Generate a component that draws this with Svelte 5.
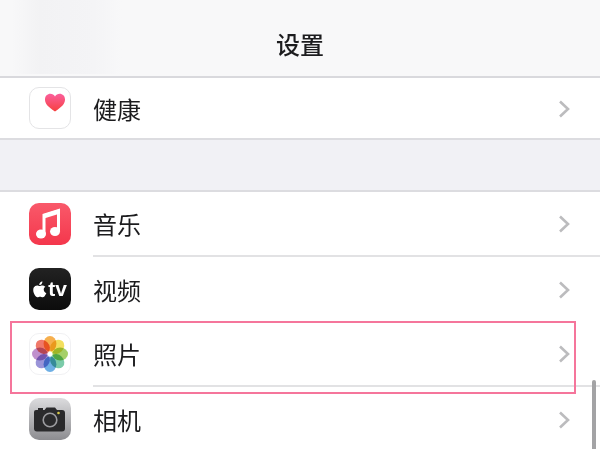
<script lang="ts">
	const petals = [
		{ angle: 0, color: "#f5a63a" },
		{ angle: 45, color: "#f2dc4c" },
		{ angle: 90, color: "#9ccb57" },
		{ angle: 135, color: "#6cc6a0" },
		{ angle: 180, color: "#5ea6e2" },
		{ angle: 225, color: "#8f88d4" },
		{ angle: 270, color: "#b984c8" },
		{ angle: 315, color: "#ef6a5a" },
	]
</script>

{#snippet chevron()}
	<svg class="chevron" width="12" height="18" viewBox="0 0 12 18">
		<path d="M2 1.5 L10 9 L2 16.5" fill="none" stroke="#bcbcbe" stroke-width="2.6" />
	</svg>
{/snippet}

<div class="page">
	<header class="nav">
		<div class="smear"></div>
		<h1>设置</h1>
	</header>

	<section class="group first">
		<div class="row health-row">
			<div class="icon health">
				<svg width="42" height="42" viewBox="0 0 42 42">
					<defs>
						<linearGradient id="heart" x1="0" y1="0" x2="0" y2="1">
							<stop offset="0" stop-color="#fb5f9c" />
							<stop offset="1" stop-color="#f6403f" />
						</linearGradient>
					</defs>
					<path d="M26 24.500 C18.500 19.500 16 16.500 16 12.500 C16 9 18.500 6.800 21.300 6.800 C23.300 6.800 25 7.800 26 9.600 C27 7.800 28.700 6.800 30.700 6.800 C33.500 6.800 36 9 36 12.500 C36 16.500 33.500 19.500 26 24.500 Z" fill="url(#heart)" />
				</svg>
			</div>
			<div class="label"><span>健康</span>{@render chevron()}</div>
		</div>
	</section>

	<div class="spacer"></div>

	<section class="group">
		<div class="row">
			<div class="icon music">
				<svg width="42" height="42" viewBox="0 0 42 42">
					<path d="M15 31 V12 L29.500 7.500 V28" fill="none" stroke="#fff" stroke-width="3" />
					<path d="M15 11 L29.500 6.500 V11 L15 15.500 Z" fill="#fff" />
					<ellipse cx="12" cy="31" rx="5" ry="4.500" fill="#fff" />
					<ellipse cx="26" cy="28.500" rx="5" ry="4.500" fill="#fff" />
				</svg>
			</div>
			<div class="label sep"><span>音乐</span>{@render chevron()}</div>
		</div>
		<div class="row">
			<div class="icon tv">
				<svg width="14" height="17" viewBox="1 1.500 18 22">
					<path d="M14.800 12.700 C14.800 10.300 16.800 9.200 16.900 9.100 C15.700 7.400 13.900 7.200 13.300 7.200 C11.800 7 10.300 8.100 9.500 8.100 C8.700 8.100 7.500 7.200 6.200 7.200 C4.500 7.300 3 8.200 2.100 9.700 C0.300 12.800 1.600 17.400 3.400 20 C4.300 21.300 5.300 22.700 6.700 22.600 C8 22.600 8.500 21.800 10.100 21.800 C11.700 21.800 12.100 22.600 13.500 22.600 C15 22.600 15.900 21.300 16.700 20 C17.700 18.500 18.100 17.100 18.200 17 C18.100 17 14.800 15.700 14.800 12.700 Z M12.100 5.300 C12.800 4.400 13.300 3.200 13.200 2 C12.100 2 10.900 2.700 10.200 3.500 C9.500 4.300 8.900 5.500 9.100 6.700 C10.300 6.800 11.400 6.100 12.100 5.300 Z" fill="#fff" />
				</svg>
				<span>tv</span>
			</div>
			<div class="label"><span>视频</span>{@render chevron()}</div>
		</div>
		<div class="row">
			<div class="icon photos">
				<svg width="42" height="42" viewBox="0 0 42 42">
					{#each petals as petal}
						<ellipse class="petal" cx="21" cy="10.800" rx="6.400" ry="7.800" fill={petal.color} transform="rotate({petal.angle} 21 21)" />
					{/each}
				</svg>
			</div>
			<div class="label sep"><span>照片</span>{@render chevron()}</div>
		</div>
		<div class="row">
			<div class="icon camera">
				<svg width="42" height="42" viewBox="0 0 42 42">
					<path d="M5 14 Q5 12 7 12 H9 V10 H14 V12 H15.500 L17.500 9.500 H26 L28 12 H33 Q36 12 36 15 V30.500 Q36 33.500 33 33.500 H8 Q5 33.500 5 30.500 Z" fill="#2a2a2c" />
					<circle cx="21" cy="22" r="6.800" fill="none" stroke="#9c9ca0" stroke-width="1.600" />
					<circle cx="29.500" cy="15" r="1.300" fill="#d7c94a" />
				</svg>
			</div>
			<div class="label"><span>相机</span>{@render chevron()}</div>
		</div>
	</section>

	<div class="highlight"></div>
	<div class="scrollbar"></div>
</div>

<style>
	:global(body) {
		margin: 0;
	}

	.page {
		position: relative;
		width: 600px;
		height: 449px;
		overflow: hidden;
		background: #f1f1f5;
		font-family: "Noto Sans CJK SC", "Liberation Sans", sans-serif;
		color: #1c1c1e;
		filter: blur(0.4px);
	}

	.nav {
		position: relative;
		height: 76px;
		display: flex;
		align-items: center;
		justify-content: center;
		background: #f8f8f9;
		border-bottom: 2px solid #d9d9dd;
	}

	.smear {
		position: absolute;
		left: 12px;
		top: 0;
		width: 110px;
		height: 74px;
		background: linear-gradient(90deg, #f8f8f9, #f2f2f4 25%, #f4f4f6 75%, #f8f8f9);
	}

	h1 {
		position: relative;
		margin: 11px 0 0;
		font-size: 24px;
		line-height: 32px;
		font-weight: 500;
	}

	.group {
		background: #fff;
		border-top: 2px solid #dcdce0;
	}

	.group.first {
		border-top: 0;
		border-bottom: 2px solid #dcdce0;
	}

	.spacer {
		height: 50px;
	}

	.row {
		display: flex;
		align-items: stretch;
		height: 65px;
		padding-left: 29px;
	}

	.health-row {
		height: 60px;
	}

	.health-row .icon {
		margin-top: 9px;
	}

	.health-row .label {
		padding-top: 2px;
	}

	.icon {
		flex: none;
		align-self: flex-start;
		width: 42px;
		height: 42px;
		margin-top: 11px;
		margin-right: 22px;
		border-radius: 10px;
		box-sizing: border-box;
		overflow: hidden;
	}

	.icon svg {
		display: block;
	}

	.health {
		border: 1px solid #e4e4e6;
		background: #fff;
	}

	.health svg {
		margin: -1px;
	}

	.music {
		background: linear-gradient(#f9596a, #f4374c);
	}

	.tv {
		display: flex;
		align-items: center;
		justify-content: center;
		gap: 1px;
		background: linear-gradient(#222, #0c0c0c);
		color: #fff;
		font-family: "Liberation Sans", sans-serif;
		font-size: 21px;
		font-weight: 700;
	}

	.photos {
		background: #fff;
		border: 1px solid #f1f1f3;
	}

	.photos svg {
		margin: -1px;
	}

	.petal {
		mix-blend-mode: multiply;
		opacity: 0.9;
	}

	.camera {
		background: linear-gradient(#dcdcde, #8c8c90);
	}

	.label {
		flex: 1;
		display: flex;
		align-items: center;
		justify-content: space-between;
		padding-right: 30px;
		font-size: 24px;
	}

	.label span {
		margin-top: -1px;
	}

	.label.sep {
		border-bottom: 2px solid #e2e2e4;
	}

	.chevron {
		flex: none;
	}

	.highlight {
		position: absolute;
		left: 10px;
		top: 321px;
		width: 566px;
		height: 73px;
		box-sizing: border-box;
		border: 2px solid #f5759b;
	}

	.scrollbar {
		position: absolute;
		left: 592px;
		top: 380px;
		width: 4px;
		height: 69px;
		border-radius: 2px 2px 0 0;
		background: #a3a3a5;
	}
</style>
